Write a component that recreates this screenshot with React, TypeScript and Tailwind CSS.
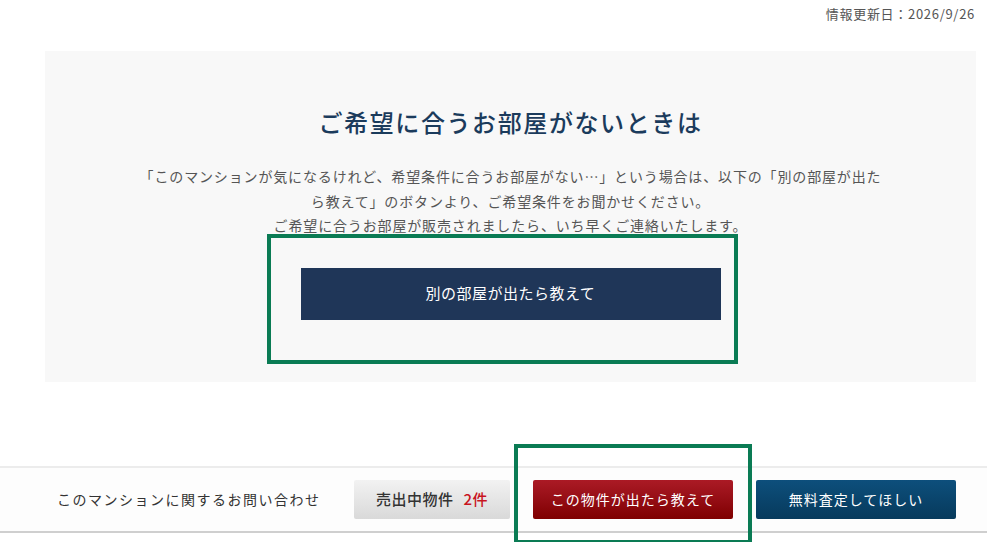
import React from "react";

export default function App() {
  const jp = { fontFamily: '"Noto Sans CJK JP", "Noto Sans", sans-serif' };
  return (
    <div className="relative w-[987px] h-[542px] bg-white overflow-hidden" style={jp}>
      <div className="flex justify-end pr-[12px] pt-[5px] h-[51px] text-[13px] leading-[18px] text-[#555] tracking-[0.7px]">
        情報更新日：2026/9/26
      </div>
      <div className="ml-[45px] w-[931px] h-[331px] bg-[#f8f8f8] flex flex-col items-center">
        <h2 className="mt-[55px] text-[24px] leading-[32px] font-medium tracking-[1.6px] text-[#1b3b5c]">
          ご希望に合うお部屋がないときは
        </h2>
        <p className="mt-[26px] w-[750px] text-center text-[14px] leading-[24.5px] tracking-[0.85px] text-[#555]">
          「このマンションが気になるけれど、希望条件に合うお部屋がない…」という場合は、以下の「別の部屋が出たら教えて」のボタンより、ご希望条件をお聞かせください。
          <br />
          ご希望に合うお部屋が販売されましたら、いち早くご連絡いたします。
        </p>
        <button className="mt-[30px] w-[420px] h-[52px] bg-[#1f3658] text-white text-[15px] tracking-[0.5px] flex items-center justify-center">
          別の部屋が出たら教えて
        </button>
      </div>
      <div className="mt-[84px] h-[67px] border-t-2 border-b-2 border-t-[#ececec] border-b-[#cfcfcf] bg-[#fdfdfd] flex items-center">
        <div className="ml-[57px] w-[264px] whitespace-nowrap text-[14px] tracking-[1.5px] text-[#333]">
          このマンションに関するお問い合わせ
        </div>
        <button className="ml-[33px] w-[156px] h-[39px] rounded-[2px] bg-gradient-to-b from-[#f2f2f2] to-[#d9d9d9] text-[#333] text-[15px] font-medium tracking-[0.5px] flex items-center justify-center">
          売出中物件<span className="ml-[10px] text-[#c8141e]">2件</span>
        </button>
        <button className="ml-[23px] w-[200px] h-[39px] rounded-[2px] bg-gradient-to-b from-[#ab1a25] to-[#7f0000] text-white text-[14px] tracking-[1px] flex items-center justify-center">
          この物件が出たら教えて
        </button>
        <button className="ml-[23px] w-[200px] h-[39px] rounded-[2px] bg-gradient-to-b from-[#0d4f7c] to-[#073a5c] text-white text-[14px] tracking-[1px] flex items-center justify-center">
          無料査定してほしい
        </button>
      </div>
      <div className="absolute left-[267px] top-[234px] w-[471px] h-[130px] border-[4px] border-[#0a7b54]" />
      <div className="absolute left-[514px] top-[444px] w-[238px] h-[100px] border-[4px] border-[#0a7b54]" />
    </div>
  );
}
